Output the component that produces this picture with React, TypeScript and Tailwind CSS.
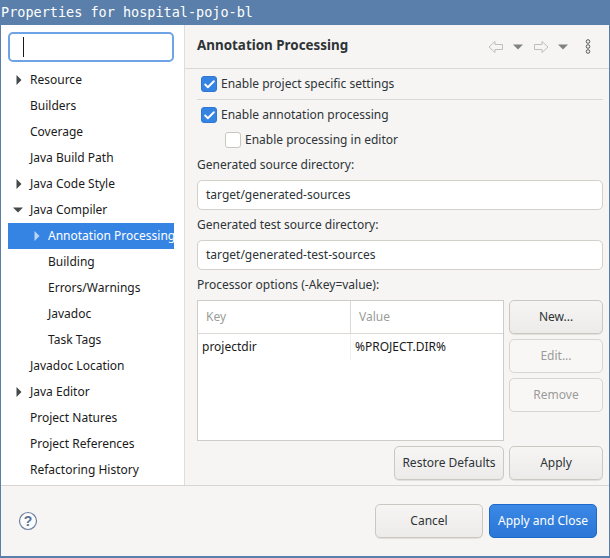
import React from 'react';
import { Check } from 'lucide-react';

const treeRows = [
    { label: 'Resource', arrow: 'right' },
    { label: 'Builders' },
    { label: 'Coverage' },
    { label: 'Java Build Path' },
    { label: 'Java Code Style', arrow: 'right' },
    { label: 'Java Compiler', arrow: 'down' },
    { label: 'Annotation Processing', arrow: 'right', child: true, selected: true },
    { label: 'Building', child: true },
    { label: 'Errors/Warnings', child: true },
    { label: 'Javadoc', child: true },
    { label: 'Task Tags', child: true },
    { label: 'Javadoc Location' },
    { label: 'Java Editor', arrow: 'right' },
    { label: 'Project Natures' },
    { label: 'Project References' },
    { label: 'Refactoring History' },
];

const TreeRow = ({ row }: { row: any }) => (
    <div className={`h-[26px] flex items-center shrink-0 ${row.selected ? 'bg-[#3584e4] text-white' : 'text-[#1a1a1a]'}`}>
        <div className={`${row.child ? 'w-[40px] pl-[26px]' : 'w-[22px] pl-[8px]'} shrink-0 flex items-center`}>
            {row.arrow === 'right' && (
                <svg width="6" height="10" viewBox="0 0 6 10">
                    <path d="M0.5 0 L5.5 5 L0.5 10 Z" fill={row.selected ? '#b9d4f6' : '#44494c'} />
                </svg>
            )}
            {row.arrow === 'down' && (
                <svg width="10" height="6" viewBox="0 0 10 6" className="-ml-[3px]">
                    <path d="M0 0.5 L10 0.5 L5 5.5 Z" fill="#44494c" />
                </svg>
            )}
        </div>
        <span className="whitespace-nowrap">{row.label}</span>
    </div>
);

const CheckBox = ({ checked, label }: { checked?: boolean; label: string }) => (
    <div className="flex items-center gap-[4px] h-[16px]">
        {checked ? (
            <div className="w-[16px] h-[16px] rounded-[3px] bg-[#3584e4] border border-[#2f78d0] flex items-center justify-center shrink-0">
                <Check size={13} strokeWidth={3.5} className="text-white" />
            </div>
        ) : (
            <div className="w-[16px] h-[16px] rounded-[3px] bg-white border border-[#c9c5bf] shrink-0" />
        )}
        <span className="text-[#2e3436] whitespace-nowrap">{label}</span>
    </div>
);

const Btn = ({ label, disabled, className }: { label: string; disabled?: boolean; className?: string }) => (
    <div
        className={`h-[34px] rounded-[5px] border flex items-center justify-center shrink-0 ${
            disabled
                ? 'border-[#d8d4ce] bg-[#f8f7f6] text-[#9a9c99]'
                : 'border-[#cdc7c2] bg-gradient-to-b from-[#f6f5f4] to-[#edebe9] text-[#2e3436] shadow-[0_1px_0_#e3e0dc]'
        } ${className ?? ''}`}
    >
        {label}
    </div>
);

const Field = ({ value }: { value: string }) => (
    <div className="h-[30px] rounded-[5px] border border-[#d3cfc9] bg-white pl-[8px] flex items-center text-[#2e3436]">{value}</div>
);

export default function App() {
    return (
        <div className="w-[610px] h-[558px] bg-[#5b7fab] flex flex-col text-[12px] overflow-hidden" style={{ fontFamily: '"Noto Sans", sans-serif' }}>
            {/* Title bar */}
            <div className="h-[25px] shrink-0 pl-[1px] flex items-center text-[13.5px] text-white whitespace-nowrap" style={{ fontFamily: '"DejaVu Sans Mono", monospace' }}>
                Properties for hospital-pojo-bl
            </div>

            <div className="mx-[1px] mb-[2px] flex-1 flex flex-col bg-[#f6f5f4] min-h-0">
                <div className="flex h-[461px] shrink-0 border-b border-[#d9d6d2]">
                    {/* Left tree */}
                    <div className="w-[184px] shrink-0 bg-white border-r border-[#e0ddd9] flex flex-col pl-[7px] pr-[9px] pt-[7px] overflow-hidden">
                        <div className="h-[30px] w-[166px] shrink-0 rounded-[5px] border-2 border-[#6ea3e6] bg-white flex items-center pl-[13px]">
                            <div className="w-px h-[20px] bg-[#1a1a1a]" />
                        </div>
                        <div className="mt-[5px] -ml-[7px] flex flex-col">
                            {treeRows.map(row => (
                                <div key={row.label} className={row.selected ? 'ml-[7px] w-[166px]' : 'pl-[7px]'}>
                                    <TreeRow row={row} />
                                </div>
                            ))}
                        </div>
                    </div>

                    {/* Right panel */}
                    <div className="flex-1 min-w-0 flex flex-col">
                        <div className="h-[44px] shrink-0 border-b border-[#dcd9d5] pl-[12px] pr-[18px] pb-[2px] flex items-center justify-between">
                            <span className="text-[13.4px] font-bold text-[#2e3436]">Annotation Processing</span>
                            <div className="flex items-center pt-[2px]">
                                <svg width="16" height="14" viewBox="0 0 16 14" fill="#f6f5f4" stroke="#bdbfbd">
                                    <path d="M1 7 L7 1.5 V4.5 H14.5 V9.5 H7 V12.5 Z" />
                                </svg>
                                <svg width="12" height="6" viewBox="0 0 12 6" className="ml-[8px]"><path d="M1 0.5 H11 L6 5.5 Z" fill="#7f8281" /></svg>
                                <svg width="16" height="14" viewBox="0 0 16 14" fill="#f6f5f4" stroke="#bdbfbd" className="ml-[9px]">
                                    <path d="M15 7 L9 1.5 V4.5 H1.5 V9.5 H9 V12.5 Z" />
                                </svg>
                                <svg width="12" height="6" viewBox="0 0 12 6" className="ml-[8px]"><path d="M1 0.5 H11 L6 5.5 Z" fill="#7f8281" /></svg>
                                <svg width="6" height="15" viewBox="0 0 6 15" fill="none" stroke="#55595a" strokeWidth="1" className="ml-[16px]">
                                    <circle cx="3" cy="2.5" r="1.8" />
                                    <circle cx="3" cy="7.5" r="1.8" />
                                    <circle cx="3" cy="12.5" r="1.8" />
                                </svg>
                            </div>
                        </div>

                        <div className="flex-1 pl-[12px] pr-[6px] flex flex-col min-h-0">
                            <div className="pl-[4px] mt-[7px]">
                                <CheckBox checked label="Enable project specific settings" />
                            </div>
                            <div className="h-px bg-[#dcd9d5] mt-[7px] shrink-0" />
                            <div className="pl-[4px] mt-[7px]">
                                <CheckBox checked label="Enable annotation processing" />
                            </div>
                            <div className="pl-[28px] mt-[9px]">
                                <CheckBox label="Enable processing in editor" />
                            </div>
                            <div className="mt-[8px] h-[18px] leading-[18px] text-[#2e3436]">Generated source directory:</div>
                            <div className="mt-[6px]"><Field value="target/generated-sources" /></div>
                            <div className="mt-[6px] h-[18px] leading-[18px] text-[#2e3436]">Generated test source directory:</div>
                            <div className="mt-[6px]"><Field value="target/generated-test-sources" /></div>
                            <div className="mt-[6px] h-[18px] leading-[18px] text-[#2e3436]">Processor options (-Akey=value):</div>

                            <div className="mt-[6px] flex gap-[5px]">
                                <div className="w-[307px] h-[141px] shrink-0 border border-[#cfcbc6] bg-white flex flex-col">
                                    <div className="h-[33px] shrink-0 flex border-b border-[#dcd9d5] text-[#9a9c99]">
                                        <div className="w-[153px] pl-[8px] flex items-center border-r border-[#dcd9d5]">Key</div>
                                        <div className="flex-1 pl-[8px] flex items-center">Value</div>
                                    </div>
                                    <div className="h-[26px] flex text-[#1a1a1a]">
                                        <div className="w-[153px] pl-[4px] flex items-center border-r border-[#f1f0ee]">projectdir</div>
                                        <div className="flex-1 pl-[4px] flex items-center">%PROJECT.DIR%</div>
                                    </div>
                                </div>
                                <div className="flex-1 flex flex-col gap-[5px]">
                                    <Btn label="New..." />
                                    <Btn label="Edit..." disabled />
                                    <Btn label="Remove" disabled />
                                </div>
                            </div>

                            <div className="mt-[5px] flex justify-end gap-[5px]">
                                <Btn label="Restore Defaults" className="w-[110px]" />
                                <Btn label="Apply" className="w-[94px]" />
                            </div>
                        </div>
                    </div>
                </div>

                {/* Footer */}
                <div className="flex-1 flex items-center justify-between pl-[17px] pr-[12px]">
                    <svg width="20" height="20" viewBox="0 0 20 20">
                        <circle cx="10" cy="10" r="8.5" fill="#fbfcfd" stroke="#6d7f9c" strokeWidth="1.2" />
                        <text x="10" y="15" textAnchor="middle" fontSize="14" fontWeight="700" fill="#5f7190" fontFamily="Liberation Sans, sans-serif">?</text>
                    </svg>
                    <div className="flex gap-[6px]">
                        <Btn label="Cancel" className="w-[108px]" />
                        <div className="w-[108px] h-[34px] rounded-[5px] border border-[#1b6acb] bg-gradient-to-b from-[#3b88e5] to-[#2b76d6] text-white flex items-center justify-center">
                            Apply and Close
                        </div>
                    </div>
                </div>
            </div>
        </div>
    );
}
